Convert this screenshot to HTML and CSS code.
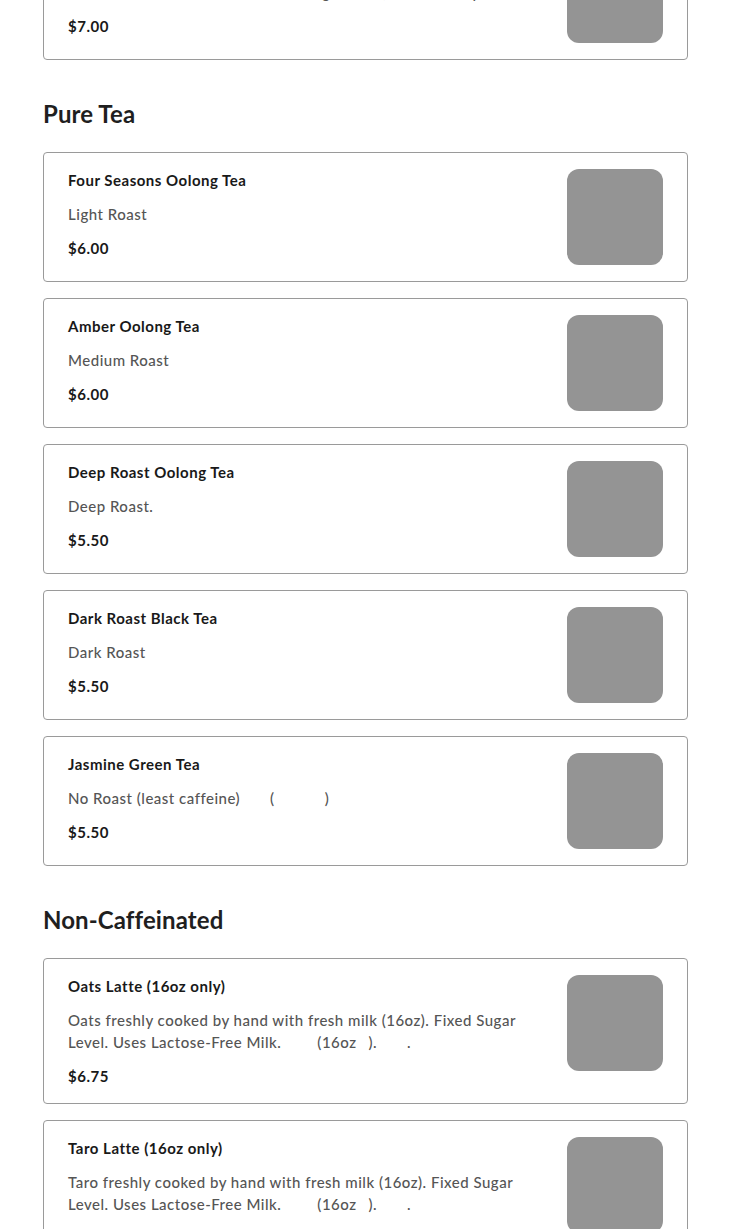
FILE: index.html
```html
<!DOCTYPE html>
<html>
<head>
<meta charset="utf-8">
<link rel="stylesheet" href="styles.css">
</head>
<body>
<main class="menu">
  <section class="category">
    <article class="item">
      <div class="info">
        <h3 class="name">Brown Sugar Boba Milk</h3>
        <p class="desc">Fresh milk with handmade brown sugar boba, cooked daily.</p>
        <p class="price">$7.00</p>
      </div>
      <div class="thumb"></div>
    </article>
  </section>

  <section class="category">
    <h2 class="cat-title">Pure Tea</h2>
    <div class="items">
      <article class="item">
        <div class="info">
          <h3 class="name">Four Seasons Oolong Tea</h3>
          <p class="desc">Light Roast</p>
          <p class="price">$6.00</p>
        </div>
        <div class="thumb"></div>
      </article>
      <article class="item">
        <div class="info">
          <h3 class="name">Amber Oolong Tea</h3>
          <p class="desc">Medium Roast</p>
          <p class="price">$6.00</p>
        </div>
        <div class="thumb"></div>
      </article>
      <article class="item">
        <div class="info">
          <h3 class="name">Deep Roast Oolong Tea</h3>
          <p class="desc">Deep Roast.</p>
          <p class="price">$5.50</p>
        </div>
        <div class="thumb"></div>
      </article>
      <article class="item">
        <div class="info">
          <h3 class="name">Dark Roast Black Tea</h3>
          <p class="desc">Dark Roast</p>
          <p class="price">$5.50</p>
        </div>
        <div class="thumb"></div>
      </article>
      <article class="item">
        <div class="info">
          <h3 class="name">Jasmine Green Tea</h3>
          <p class="desc">No Roast (least caffeine)<span class="gap g1"></span>(<span class="gap g2"></span>)</p>
          <p class="price">$5.50</p>
        </div>
        <div class="thumb"></div>
      </article>
    </div>
  </section>

  <section class="category">
    <h2 class="cat-title">Non-Caffeinated</h2>
    <div class="items">
      <article class="item">
        <div class="info">
          <h3 class="name">Oats Latte (16oz only)</h3>
          <p class="desc">Oats freshly cooked by hand with fresh milk (16oz). Fixed Sugar Level. Uses Lactose-Free Milk.<span class="gap g3"></span>(16oz<span class="gap g4"></span>).<span class="gap g5"></span>.</p>
          <p class="price">$6.75</p>
        </div>
        <div class="thumb"></div>
      </article>
      <article class="item">
        <div class="info">
          <h3 class="name">Taro Latte (16oz only)</h3>
          <p class="desc">Taro freshly cooked by hand with fresh milk (16oz). Fixed Sugar Level. Uses Lactose-Free Milk.<span class="gap g3"></span>(16oz<span class="gap g4"></span>).<span class="gap g5"></span>.</p>
          <p class="price">$6.75</p>
        </div>
        <div class="thumb"></div>
      </article>
    </div>
  </section>
</main>
</body>
</html>
```
FILE: styles.css
```css
* { box-sizing: border-box; }
html, body { margin: 0; padding: 0; background: #fff; }
body {
  font-family: "Lato", "Noto Sans", sans-serif;
  color: #191919;
  overflow: hidden;
}
.menu {
  width: 645px;
  margin: -70px 0 0 43px;
  display: flex;
  flex-direction: column;
  gap: 40px;
}
.category { display: flex; flex-direction: column; }
.cat-title {
  margin: 0 0 24px;
  font-size: 24px;
  line-height: 28px;
  font-weight: 700;
  color: #1f1f1f;
  letter-spacing: 0.1px;
}
.items { display: flex; flex-direction: column; gap: 16px; }
.item {
  display: flex;
  justify-content: space-between;
  align-items: flex-start;
  gap: 24px;
  padding: 16px 24px;
  border: 1px solid #9a9a9a;
  border-radius: 4px;
}
.info { display: flex; flex-direction: column; gap: 12px; flex: 1; min-width: 0; }
.name, .desc, .price { margin: 0; font-size: 15px; line-height: 22px; letter-spacing: 0.5px; }
.name { font-weight: 700; color: #191919; }
.desc { font-weight: 500; color: #555; }
.price { font-weight: 700; color: #191919; }
.thumb {
  flex: none;
  width: 96px;
  height: 96px;
  border-radius: 12px;
  background: #949494;
}
.gap { display: inline-block; }
.g1 { width: 30px; }
.g2 { width: 50px; }
.g3 { width: 36px; }
.g4 { width: 12px; }
.g5 { width: 30px; }
```
